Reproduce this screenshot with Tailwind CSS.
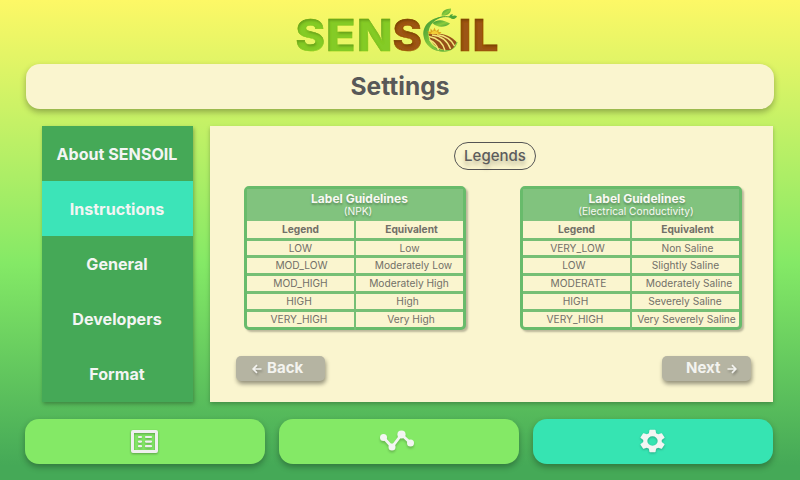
<!DOCTYPE html>
<html lang="en">
<head>
<meta charset="utf-8">
<title>SENSOIL Settings</title>
<script src="https://cdn.jsdelivr.net/npm/@tailwindcss/browser@4"></script>
</head>
<body class="w-[800px] h-[480px] overflow-hidden font-['Inter',sans-serif] bg-[linear-gradient(180deg,#fdf866_0%,#84e966_55%,#45a957_97%)]">
<div class="w-[800px] h-[480px] flex flex-col">
  <header class="h-16 pl-[290px] shrink-0">
    <svg width="220" height="60" viewBox="290 0 220 60" role="img" aria-label="SENSOIL">
      <defs>
        <linearGradient id="leaf" x1="0" y1="0" x2="1" y2="1"><stop offset="0" stop-color="#2f8f35"/><stop offset=".55" stop-color="#8ccc3c"/><stop offset="1" stop-color="#3d9a38"/></linearGradient>
        <filter id="inset" x="-10%" y="-10%" width="120%" height="120%">
          <feOffset in="SourceAlpha" dx="0.5" dy="1.5" result="o"/>
          <feGaussianBlur in="o" stdDeviation="1" result="b"/>
          <feComposite in="SourceAlpha" in2="b" operator="out" result="i"/>
          <feFlood flood-color="#000" flood-opacity=".4"/>
          <feComposite in2="i" operator="in" result="s"/>
          <feMerge><feMergeNode in="SourceGraphic"/><feMergeNode in="s"/></feMerge>
        </filter>
      </defs>
      <g font-family="Inter, sans-serif" font-weight="800" font-size="43.5" stroke-width=".6" filter="url(#inset)">
        <g fill="#84cb26" stroke="#84cb26">
          <text x="295.5" y="51" textLength="29.5" lengthAdjust="spacingAndGlyphs">S</text>
          <text x="326" y="51" textLength="29.5" lengthAdjust="spacingAndGlyphs">E</text>
          <text x="357" y="51" textLength="35.5" lengthAdjust="spacingAndGlyphs">N</text>
        </g>
        <g fill="#9c5512" stroke="#9c5512">
          <text x="392.5" y="51" textLength="29.5" lengthAdjust="spacingAndGlyphs">S</text>
          <text x="458.5" y="51" textLength="13" lengthAdjust="spacingAndGlyphs">I</text>
          <text x="472.5" y="51" textLength="26" lengthAdjust="spacingAndGlyphs">L</text>
        </g>
      </g>
      <path d="M447 16C431 17 422 25 423.500 36C425 47 436 54 449 50.500C437 50.500 429 45 428.500 35C428 25 435 18 447 16Z" fill="url(#leaf)"/>
      <path d="M429 43C432 50 442 53 450 50C454 48 456.500 45 457 42" fill="none" stroke="#7fc241" stroke-width="1.200"/>
      <path d="M428.500 34C440 32 451 35 456.500 42C455 46 453 49 450 50C441 51 431 46 428.500 34Z" fill="#97501a"/>
      <g fill="none" stroke="#f3e77a" stroke-width="1.400"><path d="M429 36.500C437 38 443 43 445 50.500"/><path d="M429.500 40C434 42 437 45 438.500 50"/><path d="M432 35C442 36 448 42 450.500 49"/><path d="M437 34.500C446 36 452 40 454.500 46"/></g>
      <path d="M429 34L427.500 31L430.500 32L430.500 28.500L433 31L434.500 27.500L436 31L439 29L438.500 32L441.500 32L439.500 34.500Z" fill="#dda71e"/>
      <path d="M431 34C431 30 438 30 438.500 34Z" fill="#f4cf38"/>
      <path d="M432.500 23C438 18.500 444 20 450 23.500C445 28 437 28 432.500 23Z" fill="url(#leaf)"/>
      <path d="M441.500 15.500C442 10 446 9 451 8.500C451.500 13 447 16.500 441.500 15.500Z" fill="url(#leaf)"/>
      <path d="M449 17C450 14 452 14 453 14.500L452 16C454 15 456 15.500 457 16.500C456 19 452 20 450.500 18Z" fill="#4fa637"/>
      <path d="M433 21C438 17 444 16 450 17" fill="none" stroke="#4da337" stroke-width="1"/>
    </svg>
  </header>

  <h1 class="ml-[26px] w-[748px] h-[45px] shrink-0 rounded-[14px] bg-[#faf5cf] shadow-[0_3px_6px_rgba(0,0,0,0.3)] flex items-center justify-center text-[24.500px] font-bold text-[#585858]">Settings</h1>

  <main class="mt-[17px] pl-[42px] flex h-[276px] shrink-0 gap-[17px]">
    <nav class="w-[151px] grid grid-rows-5 bg-[#45a957] shadow-[1px_2px_4px_rgba(0,0,0,0.3)] text-[16.100px] font-bold text-[#f3f5f3] text-center [&>*]:pr-px">
      <a class="flex items-center justify-center">About SENSOIL</a>
      <a class="flex items-center justify-center bg-[#3ce4b8]">Instructions</a>
      <a class="flex items-center justify-center">General</a>
      <a class="flex items-center justify-center">Developers</a>
      <a class="flex items-center justify-center">Format</a>
    </nav>

    <section class="w-[563px] bg-[#faf5cf] shadow-[0_2px_4px_rgba(0,0,0,0.25)] text-[#727068]">
      <div class="pt-4 flex justify-center pl-[7px]">
        <h2 class="w-[82px] h-7 rounded-full border border-[#545454] flex items-center justify-center text-[15px] font-medium text-[#5c5c5c] [text-shadow:0_4px_4px_rgba(0,0,0,0.25)]">Legends</h2>
      </div>

      <div class="mt-4 pl-[34px] flex gap-[54px]">
        <div class="w-[222px] h-[144px] rounded-[5px] border-[3px] border-[#68bb6b] bg-[#faf5cf] shadow-[2px_2px_2px_rgba(0,0,0,0.25)] text-[10.200px] flex flex-col">
          <div class="h-8 shrink-0 bg-[#81c37e] pl-[9px] pt-[3px] text-center text-[#f8f8f3] [text-shadow:0_2px_2px_rgba(0,0,0,0.25)]">
            <div class="text-[12px] leading-[14px] font-bold">Label Guidelines</div>
            <div class="text-[10.200px] leading-[11px] pr-[3px]">(NPK)</div>
          </div>
          <div class="flex-1 grid grid-cols-[109px_1fr] grid-rows-[20px_17px_repeat(4,18px)] text-center leading-[14px] [&>*]:border-[#76bf75] [&>*]:border-b-[3px] [&>*:nth-child(odd)]:border-r-2 [&>*:nth-last-child(-n+2)]:border-b-0">
            <div class="font-bold leading-[17px]">Legend</div><div class="font-bold leading-[17px] pl-1">Equivalent</div>
            <div>LOW</div><div>Low</div>
            <div class="pl-[2px] leading-[15px]">MOD_LOW</div><div class="pl-2 leading-[15px]">Moderately Low</div>
            <div class="leading-[15px]">MOD_HIGH</div><div class="pr-px leading-[15px]">Moderately High</div>
            <div class="pr-[3px] leading-[15px]">HIGH</div><div class="pr-1 leading-[15px]">High</div>
            <div class="pr-[3px] leading-[15px]">VERY_HIGH</div><div class="pl-[3px] leading-[15px]">Very High</div>
          </div>
        </div>

        <div class="w-[222px] h-[144px] rounded-[5px] border-[3px] border-[#68bb6b] bg-[#faf5cf] shadow-[2px_2px_2px_rgba(0,0,0,0.25)] text-[10.200px] flex flex-col">
          <div class="h-8 shrink-0 bg-[#81c37e] pl-3 pt-[3px] text-center text-[#f8f8f3] [text-shadow:0_2px_2px_rgba(0,0,0,0.25)]">
            <div class="text-[12px] leading-[14px] font-bold">Label Guidelines</div>
            <div class="text-[10.200px] leading-[11px] pr-[2px]">(Electrical Conductivity)</div>
          </div>
          <div class="flex-1 grid grid-cols-[109px_1fr] grid-rows-[20px_17px_repeat(4,18px)] text-center leading-[14px] whitespace-nowrap [&>*]:border-[#76bf75] [&>*]:border-b-[3px] [&>*:nth-child(odd)]:border-r-2 [&>*:nth-last-child(-n+2)]:border-b-0">
            <div class="font-bold leading-[17px]">Legend</div><div class="font-bold leading-[17px] pl-1">Equivalent</div>
            <div class="pl-[2px]">VERY_LOW</div><div class="pl-1">Non Saline</div>
            <div class="pr-[5px] leading-[15px]">LOW</div><div class="leading-[15px]">Slightly Saline</div>
            <div class="pl-1 leading-[15px]">MODERATE</div><div class="pl-[7px] leading-[15px]">Moderately Saline</div>
            <div class="pr-[2px] leading-[15px]">HIGH</div><div class="pr-px leading-[15px]">Severely Saline</div>
            <div class="pr-[3px] leading-[15px]">VERY_HIGH</div><div class="pl-[2px] leading-[15px]">Very Severely Saline</div>
          </div>
        </div>
      </div>

      <div class="mt-[26px] pl-[26px] pr-[22px] flex justify-between text-[15px] font-bold text-[#f3f3ef] [text-shadow:1px_2px_2px_rgba(0,0,0,0.25)]">
        <button class="w-[89px] h-[25px] rounded-[5px] bg-[#b5b4a2] shadow-[1px_3px_4px_rgba(0,0,0,0.4)] flex items-center pl-4 gap-[5px]">
          <svg class="drop-shadow-[1px_2px_1px_rgba(0,0,0,0.25)]" width="10" height="10" viewBox="0 0 10 10" fill="none" stroke="#f3f3ef" stroke-width="1.700"><path d="M9.500 5H1.500M5 1.200L1.200 5L5 8.800"/></svg>
          Back</button>
        <button class="w-[89px] h-[25px] rounded-[5px] bg-[#b5b4a2] shadow-[1px_3px_4px_rgba(0,0,0,0.4)] flex items-center pl-6 gap-[7px]">
          Next
          <svg class="drop-shadow-[1px_2px_1px_rgba(0,0,0,0.25)]" width="10" height="10" viewBox="0 0 10 10" fill="none" stroke="#f3f3ef" stroke-width="1.700"><path d="M.5 5H8.500M5 1.200L8.800 5L5 8.800"/></svg></button>
      </div>
    </section>
  </main>

  <footer class="mt-[17px] pl-[25px] flex gap-[14px] h-[45px] shrink-0 [&>*]:w-60 [&>*]:rounded-[14px] [&>*]:flex [&>*]:items-center [&>*]:justify-center [&>*]:pb-px [&>*]:shadow-[0_3px_6px_rgba(0,0,0,0.3)]">
    <a class="bg-[#84e966] pr-px">
      <svg class="drop-shadow-[0_1px_1px_rgba(0,0,0,0.3)]" width="27" height="23" viewBox="0 0 27 23" fill="none" stroke="#efefef"><rect x="1.500" y="1.500" width="24" height="20" rx=".5" stroke-width="3"/><g stroke-width="2.200" stroke-linecap="round"><path d="M8 7H10M15 7H20M8 11.600H10M15 11.600H20M8 16.200H10M15 16.200H20"/></g></svg>
    </a>
    <a class="bg-[#84e966] pr-1">
      <svg class="drop-shadow-[0_2px_1px_rgba(0,0,0,0.2)]" width="36" height="22" viewBox="0 0 36 22" fill="#f3f5f3"><path d="M4.500 7.500L13 17L22.500 4.500L31.500 13" fill="none" stroke="#f3f5f3" stroke-width="2.800"/><circle cx="4.500" cy="7.500" r="3.500"/><circle cx="13" cy="17" r="3.500"/><circle cx="22.500" cy="4.500" r="4.100"/><circle cx="31.500" cy="13" r="3.500"/></svg>
    </a>
    <a class="bg-[#36e4b2] pr-px">
      <svg class="drop-shadow-[0_1px_1px_rgba(0,0,0,0.25)]" width="31" height="28" viewBox="0 0 24 24" preserveAspectRatio="none" fill="#f3f5f3"><path d="M19.140 12.940c.04-.3.060-.61.060-.94 0-.32-.02-.64-.07-.94l2.030-1.580a.49.49 0 0 0 .12-.61l-1.920-3.320a.488.488 0 0 0-.59-.22l-2.390.96c-.5-.38-1.030-.7-1.620-.94l-.36-2.540a.484.484 0 0 0-.48-.41h-3.840c-.24 0-.43.17-.47.41l-.36 2.540c-.59.24-1.130.57-1.620.94l-2.390-.96c-.22-.08-.47 0-.59.22L2.740 8.870c-.12.21-.08.470.12.610l2.030 1.580c-.05.3-.09.63-.09.94s.02.640.07.940l-2.030 1.580a.49.49 0 0 0-.12.610l1.920 3.320c.12.220.37.290.59.220l2.390-.96c.5.380 1.030.7 1.620.94l.36 2.540c.05.240.24.410.48.410h3.840c.24 0 .44-.17.470-.41l.36-2.540c.59-.24 1.130-.56 1.620-.94l2.390.96c.22.080.47 0 .59-.22l1.920-3.320a.49.49 0 0 0-.12-.61zM12 16A4 4 0 1 1 12 8a4 4 0 0 1 0 8z"/></svg>
    </a>
  </footer>
</div>
</body>
</html>
